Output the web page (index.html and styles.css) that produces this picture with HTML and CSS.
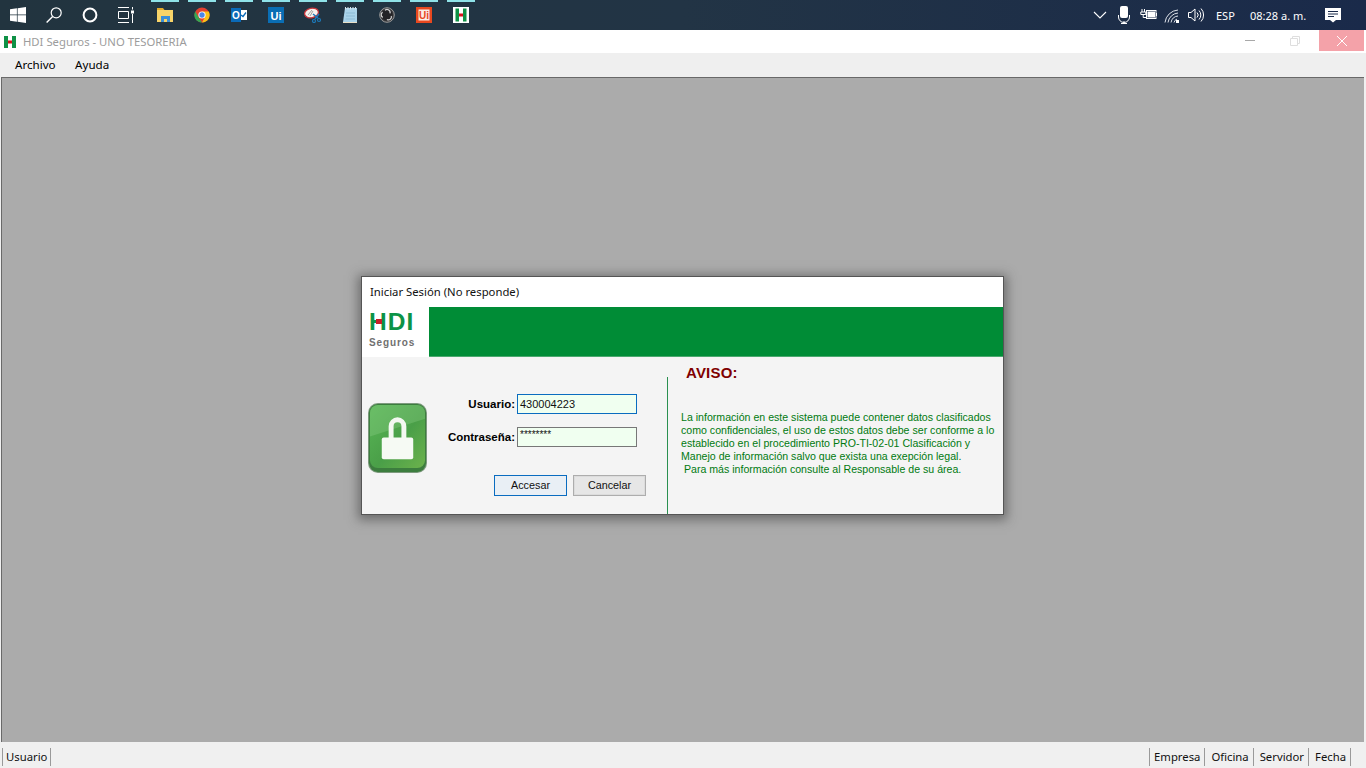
FILE: index.html
```html
<!DOCTYPE html>
<html lang="es">
<head>
    <meta charset="UTF-8">
    <title>HDI Seguros - UNO TESORERIA</title>
    <link rel="stylesheet" href="styles.css">
</head>
<body>

<!--windows taskbar-->
<div class="taskbar">
    <div class="slot">
        <svg class="ic" viewBox="0 0 16 16"><path fill="#fff" d="M0 2.300l6.900-1v6.300H0zM7.600 1.200L16 0v7.600H7.600zM0 8.300h6.900v6.400L0 13.700zM7.600 8.300H16V16l-8.400-1.200z"/></svg>
    </div>
    <div class="slot">
        <svg class="ic" viewBox="0 0 16 16"><circle cx="10.200" cy="5.800" r="5" fill="none" stroke="#fff" stroke-width="1.200"/><path d="M6.600 9.400L0.600 15.400" stroke="#fff" stroke-width="1.400"/></svg>
    </div>
    <div class="slot">
        <svg class="ic" viewBox="0 0 16 16"><circle cx="8" cy="8" r="6.400" fill="none" stroke="#fff" stroke-width="2"/></svg>
    </div>
    <div class="slot">
        <svg class="ic" viewBox="0 0 16 16"><path fill="none" stroke="#fff" d="M0 .5h11M.5 4.500h10v7H.5zM0 15.500h11M14.500 0v2.500M14.500 7v9"/><rect x="13" y="3.500" width="3" height="3" fill="#fff"/></svg>
    </div>

    <div class="apps">
        <div class="app">
            <svg class="ic" viewBox="0 0 16 16"><path fill="#e2a82b" d="M0 1h6l1.500 2H0z"/><path fill="#f8d469" d="M0 3h16v12H0z"/><path fill="#3a8fd8" d="M4 9h9v6h-3v-3H7v3H4z"/></svg>
        </div>
        <div class="app">
            <svg class="ic" viewBox="0 0 16 16"><circle cx="8" cy="8" r="7.500" fill="#e2402f"/><path fill="#34a853" d="M1.200 4.500L5 11l3 4.500A7.500 7.500 0 0 1 1.200 4.500z"/><path fill="#fbc116" d="M8 4.500h6.800a7.500 7.500 0 0 1-6.800 11L11 10z"/><circle cx="8" cy="8" r="3.600" fill="#fff"/><circle cx="8" cy="8" r="2.700" fill="#4a86e8"/></svg>
        </div>
        <div class="app">
            <svg class="ic" viewBox="0 0 16 16"><rect x="7" y="3" width="9" height="10" fill="#fff"/><path d="M10 8l2 1.500 3-4" fill="none" stroke="#0a6ab8" stroke-width="1.300"/><rect y="1" width="10" height="14" fill="#0a6ab8"/><text x="5" y="11.500" class="ic-text" font-size="10" text-anchor="middle">O</text></svg>
        </div>
        <div class="app">
            <svg class="ic" viewBox="0 0 16 16"><rect width="16" height="16" fill="#0a6eb4"/><text x="8" y="12.500" class="ic-text" font-size="11" text-anchor="middle">Ui</text></svg>
        </div>
        <div class="app">
            <svg class="ic ic-wide" viewBox="0 0 18 16"><ellipse cx="7.500" cy="6" rx="7" ry="4.700" transform="rotate(-12 7.500 6)" fill="#f6f2ee" stroke="#c8363c" stroke-width="1.300"/><path d="M4 8l4-5M6 9l3-5" stroke="#8a8a8a" stroke-width=".8"/><path d="M9 7l5 4M15 7l-4 5" stroke="#1c78b8" stroke-width="1.500" fill="none"/><circle cx="10" cy="14" r="1.500" fill="none" stroke="#1c78b8" stroke-width="1.200"/><circle cx="15" cy="13" r="1.500" fill="none" stroke="#1c78b8" stroke-width="1.200"/></svg>
        </div>
        <div class="app">
            <svg class="ic" viewBox="0 0 16 16"><path fill="#a9d3ea" d="M3 1h12v14H1z"/><path fill="#e9dfc6" d="M1 15h14v1H1z"/><path d="M3.500 0v2.500M6 0v2.500M8.500 0v2.500M11 0v2.500M13.500 0v2.500" stroke="#dbe6ec"/><path d="M4 6h9M4 9h9M3.500 12h9.500" stroke="#7fb2cf" stroke-width=".7"/></svg>
        </div>
        <div class="app">
            <svg class="ic" viewBox="0 0 16 16"><circle cx="8" cy="8" r="7.300" fill="#3a3a3d" stroke="#9a9a9a"/><circle cx="8" cy="8" r="5.600" fill="#232326"/><path fill="none" stroke="#d4d4d4" stroke-width="1.200" d="M6 3.400a3 3 0 0 1 5 3M12.300 9a3 3 0 0 1-4.400 3.400M3.800 10.400a3 3 0 0 1-.2-5.200"/></svg>
        </div>
        <div class="app">
            <svg class="ic" viewBox="0 0 16 16"><rect width="16" height="16" fill="#e8481f"/><rect x="2.500" y="2.500" width="11" height="11" fill="#fbeee8"/><text x="8" y="12" class="ic-text ic-text-red" font-size="10" text-anchor="middle">Ui</text></svg>
        </div>
        <div class="app">
            <svg class="ic" viewBox="0 0 16 16"><rect width="16" height="16" fill="#fff"/><path fill="#0f9146" d="M2.500 1.500h3.500v13H2.500zM10 1.500h3.500v13H10z"/><rect x="6" y="6.500" width="4" height="3" fill="#d9141e"/></svg>
        </div>
    </div>

    <div class="tray">
        <div class="tray-slot">
            <svg class="tray-ic" viewBox="0 0 16 16"><path d="M2 5l6 6 6-6" fill="none" stroke="#fff" stroke-width="1.100"/></svg>
        </div>
        <div class="tray-slot">
            <svg class="tray-ic tray-tall" viewBox="0 0 12 18"><rect x="2" y="0" width="8" height="12" rx="2" fill="#fff"/><path d="M.5 9v2a5.500 5.500 0 0 0 11 0V9M6 15v2.500M3 17.500h6" fill="none" stroke="#fff"/></svg>
        </div>
        <div class="tray-slot">
            <svg class="tray-ic tray-batt" viewBox="0 0 17 12"><path d="M2 0v3M4.500 0v3M.8 3h5v2.500h-5zM3.200 5.500v3h3" stroke="#fff" fill="none"/><rect x="6.500" y="1.500" width="9.500" height="8" fill="none" stroke="#fff"/><rect x="7.500" y="2.500" width="7.500" height="6" fill="#fff"/><rect x="16" y="4" width="1" height="3" fill="#fff"/></svg>
        </div>
        <div class="tray-slot">
            <svg class="tray-ic" viewBox="0 0 16 16"><path d="M1 15.500A14 14 0 0 1 14 3M4 15.500A11 11 0 0 1 14 6M7 15.500A8 8 0 0 1 14 9M10 15.500A5 5 0 0 1 13 12" fill="none" stroke="#dfe3ea"/><rect x="12" y="13" width="3" height="3" fill="#fff"/></svg>
        </div>
        <div class="tray-slot">
            <svg class="tray-ic" viewBox="0 0 16 16"><path d="M.5 5.500h2.500L7 2v12L3 10.500H.5z" fill="none" stroke="#fff"/><path d="M9 5.500a3.500 3.500 0 0 1 0 5M11 3.500a6.500 6.500 0 0 1 0 9M13 1.500a9.500 9.500 0 0 1 0 13" fill="none" stroke="#fff"/></svg>
        </div>
        <div class="lang">ESP</div>
        <div class="clock">08:28 a. m.</div>
        <div class="notif">
            <svg class="notif-ic" viewBox="0 0 16 16"><path fill="#fff" d="M0 1h16v12h-5l-3 2.500L5 13H0z"/><path d="M3 4.500h10M3 7h10M3 9.500h6" stroke="#1a2a4a"/></svg>
        </div>
    </div>
</div>

<!--title of the main window-->
<div class="titlebar">
    <svg class="win-icon" viewBox="0 0 12 12"><path fill="#0f9146" d="M0 0h4v12H0zM8 0h4v12H8z"/><rect x="4" y="4.500" width="4" height="3" fill="#d9141e"/></svg>
    <span class="win-title">HDI Seguros - UNO TESORERIA</span>
    <div class="win-buttons">
        <div class="win-btn"><span class="win-min"></span></div>
        <div class="win-btn">
            <svg class="win-x" viewBox="0 0 10 10"><path d="M.5 2.500h7v7h-7zM2.500 2.500v-2h7v7h-2" fill="none" stroke="#dedede"/></svg>
        </div>
        <div class="win-btn win-close">
            <svg class="win-x" viewBox="0 0 10 10"><path d="M0 0l10 10M10 0L0 10" stroke="#fff"/></svg>
        </div>
    </div>
</div>

<div class="menubar">
    <span class="menu-item">Archivo</span>
    <span class="menu-item">Ayuda</span>
</div>

<div class="workspace">

    <!--login dialog-->
    <div class="dialog">
        <div class="dialog-title">Iniciar Sesión (No responde)</div>
        <div class="dialog-header">
            <div class="logo">
                <span class="logo-hdi">HDI</span>
                <span class="logo-seguros">Seguros</span>
            </div>
            <div class="band"></div>
        </div>
        <div class="dialog-body">
            <div class="login">
                <svg class="lock" viewBox="0 0 60 71">
                    <defs>
                        <linearGradient id="lockBg" x1="0" y1="0" x2="1" y2="1">
                            <stop offset="0" stop-color="#58b656"/>
                            <stop offset=".55" stop-color="#4a9f48"/>
                            <stop offset="1" stop-color="#6cb24c"/>
                        </linearGradient>
                    </defs>
                    <rect x="0" y="0" width="60" height="71" rx="10" fill="#7d9a7d"/>
                    <rect x="1" y="1" width="58" height="69" rx="9" fill="#3c7d3e"/>
                    <rect x="2" y="2" width="56" height="64" rx="8" fill="url(#lockBg)"/>
                    <path d="M2 34V10a8 8 0 0 1 8-8h40a8 8 0 0 1 8 8v6z" fill="#8ccf86" opacity=".35"/>
                    <path d="M23.500 36V23.500a6.500 6.500 0 0 1 13 0V36" fill="none" stroke="#f3f8f1" stroke-width="5"/>
                    <rect x="14" y="35" width="32" height="22" rx="2" fill="#f6faf4"/>
                </svg>
                <div class="form">
                    <div class="form-row">
                        <label class="form-label">Usuario:</label>
                        <div class="field field-active">430004223</div>
                    </div>
                    <div class="form-row">
                        <label class="form-label">Contraseña:</label>
                        <div class="field field-pass">********</div>
                    </div>
                    <div class="form-buttons">
                        <div class="btn btn-default">Accesar</div>
                        <div class="btn">Cancelar</div>
                    </div>
                </div>
            </div>
            <div class="notice">
                <h3 class="notice-title">AVISO:</h3>
                <p class="notice-text">La información en este sistema puede contener datos clasificados<br>como confidenciales, el uso de estos datos debe ser conforme a lo<br>establecido en el procedimiento PRO-TI-02-01 Clasificación y<br>Manejo de información salvo que exista una exepción legal.<br>&nbsp;Para más información consulte al Responsable de su área.</p>
            </div>
        </div>
    </div>
</div>

<div class="statusbar">
    <span class="status-item status-first">Usuario</span>
    <div class="status-right">
        <span class="status-item status-empresa">Empresa</span>
        <span class="status-item">Oficina</span>
        <span class="status-item">Servidor</span>
        <span class="status-item">Fecha</span>
    </div>
</div>

</body>
</html>
```

FILE: styles.css
```css
html, body {
    margin: 0;
    padding: 0;
    width: 100%;
    height: 100%;
    overflow: hidden;
}

body {
    display: flex;
    flex-direction: column;
    font-family: "Noto Sans", sans-serif;
    font-size: 11.3px;
    background: #f0f0f0;
}

/*taskbar*/
.taskbar {
    display: flex;
    align-items: center;
    flex: 0 0 30px;
    background: linear-gradient(90deg, #22343f 0%, #223445 50%, #1a2a4a 100%);
}

.slot {
    display: flex;
    justify-content: center;
    width: 36px;
}

.ic {
    display: block;
    width: 16px;
    height: 16px;
}

.ic-wide {
    width: 18px;
    margin-left: -1px;
}

.ic-text {
    font-family: "Liberation Sans", sans-serif;
    font-weight: bold;
    fill: #fff;
}

.ic-text-red {
    fill: #e8481f;
}

.apps {
    display: flex;
    margin-left: 2px;
}

.app {
    display: flex;
    align-items: center;
    position: relative;
    box-sizing: border-box;
    width: 37px;
    height: 30px;
    padding-left: 11px;
}

.app::before {
    content: "";
    position: absolute;
    top: 0;
    left: 5px;
    width: 28px;
    height: 2px;
    background: #8fe2e8;
}

.tray {
    display: flex;
    align-items: center;
    margin-left: auto;
    padding-right: 13px;
    color: #fff;
    font-size: 11px;
}

.tray-slot {
    display: flex;
    justify-content: center;
    align-items: center;
    width: 24px;
}

.tray-ic {
    display: block;
    width: 16px;
    height: 16px;
}

.tray-tall {
    width: 12px;
    height: 18px;
}

.tray-batt {
    width: 17px;
    height: 12px;
}

.lang {
    width: 34px;
    padding-left: 8px;
}

.clock {
    width: 63px;
}

.notif {
    display: flex;
    justify-content: center;
    width: 40px;
}

.notif-ic {
    display: block;
    width: 16px;
    height: 16px;
}

/*window title*/
.titlebar {
    display: flex;
    align-items: center;
    flex: 0 0 23px;
    background: #fff;
    padding: 0 2px 0 4px;
}

.win-icon {
    width: 12px;
    height: 12px;
    margin-right: 7px;
}

.win-title {
    color: #9c9c9c;
}

.win-buttons {
    display: flex;
    align-items: flex-start;
    align-self: flex-start;
    margin-left: auto;
}

.win-btn {
    display: flex;
    justify-content: center;
    align-items: center;
    box-sizing: border-box;
    width: 45px;
    height: 21px;
    padding-right: 3px;
}

.win-min {
    display: block;
    width: 10px;
    height: 1px;
    background: #a8a8a8;
}

.win-close {
    padding-right: 0;
    background: #f4a2a9;
}

.win-x {
    width: 10px;
    height: 10px;
}

.menubar {
    display: flex;
    align-items: center;
    flex: 0 0 24px;
    box-sizing: border-box;
    padding: 0 0 2px 5px;
    background: #efefef;
    font-size: 11.6px;
}

.menu-item {
    padding: 0 9.5px 0 10px;
    color: #000;
}

/*gray area behind the dialog*/
.workspace {
    position: relative;
    flex: 1;
    margin: 0 2px 0 1px;
    background: #ababab;
    border-top: 1px solid #696969;
    border-left: 1px solid #696969;
}

.dialog {
    position: absolute;
    left: 359px;
    top: 198px;
    width: 641px;
    border: 1px solid #555;
    background: #f4f4f4;
    box-shadow: 0 2px 10px 3px rgba(60, 60, 60, 0.55);
}

.dialog-title {
    height: 30px;
    line-height: 30px;
    padding-left: 8px;
    background: #fff;
    color: #111;
}

.dialog-header {
    display: flex;
    height: 50px;
}

.logo {
    display: flex;
    flex-direction: column;
    width: 60px;
    height: 50px;
    padding-left: 7px;
    background: #fff;
}

.logo-hdi {
    position: relative;
    height: 29px;
    margin-top: 1px;
    font-family: "Liberation Sans", sans-serif;
    font-size: 24.5px;
    font-weight: bold;
    line-height: 28px;
    letter-spacing: 1px;
    color: #0c9347;
}

.logo-hdi::after {
    content: "";
    position: absolute;
    left: 7px;
    top: 11px;
    width: 6px;
    height: 5px;
    background: #c8202a;
}

.logo-seguros {
    font-family: "Liberation Sans", sans-serif;
    font-size: 10px;
    font-weight: bold;
    letter-spacing: 0.9px;
    color: #707070;
}

.band {
    flex: 1;
    background: #008c36;
    border-bottom: 1px solid #4aa86e;
}

.dialog-body {
    display: flex;
    height: 157px;
    font-family: "Liberation Sans", sans-serif;
}

.login {
    display: flex;
    width: 305px;
    margin-top: 20px;
    border-right: 1px solid #2a9050;
}

.lock {
    flex: 0 0 59px;
    width: 59px;
    height: 70px;
    margin: 26px 1px 0 6px;
}

.form {
    display: flex;
    flex-direction: column;
    width: 238px;
    padding-top: 16px;
}

.form-row {
    display: flex;
    align-items: center;
    justify-content: flex-end;
    height: 21px;
    margin-bottom: 12px;
    padding-right: 29px;
}

.form-label {
    margin-right: 2px;
    font-size: 11.5px;
    font-weight: bold;
    color: #000;
}

.field {
    box-sizing: border-box;
    width: 120px;
    height: 20px;
    padding-left: 2px;
    border: 1px solid #777;
    background: #f0fff0;
    font-size: 11px;
    line-height: 18px;
    color: #111;
}

.field-active {
    border-color: #0a6cc0;
}

.field-pass {
    font-size: 10px;
    line-height: 14px;
}

.form-buttons {
    display: flex;
    justify-content: flex-end;
    gap: 6px;
    margin-top: 16px;
    padding-right: 20px;
}

.btn {
    box-sizing: border-box;
    width: 73px;
    height: 21px;
    border: 1px solid #adadad;
    box-shadow: inset 0 0 0 1px #dcdcdc;
    background: #e6e6e6;
    font-size: 10.8px;
    line-height: 19px;
    text-align: center;
    color: #111;
}

.btn-default {
    border-color: #0a6cc0;
    box-shadow: none;
    background: #e9eff5;
}

.notice {
    flex: 1;
}

.notice-title {
    margin: 7px 0 0 18px;
    font-size: 15px;
    font-weight: bold;
    line-height: 17px;
    letter-spacing: 0.2px;
    color: #800000;
}

.notice-text {
    margin: 30px 0 0 13px;
    font-size: 10.6px;
    line-height: 13px;
    white-space: nowrap;
    color: #007a10;
}

.statusbar {
    display: flex;
    align-items: center;
    flex: 0 0 26px;
    box-sizing: border-box;
    padding: 4px 0 0 2px;
    background: #f0f0f0;
    color: #111;
}

.status-item {
    padding: 0 4px 0 6px;
    border-right: 1px solid #9a9a9a;
    line-height: 18px;
}

.status-first {
    border-left: 1px solid #9a9a9a;
    padding: 0 3px 0 3px;
}

.status-empresa {
    border-left: 1px solid #9a9a9a;
    padding-left: 4px;
}

.status-right {
    display: flex;
    margin-left: auto;
    padding-right: 15px;
}
```
